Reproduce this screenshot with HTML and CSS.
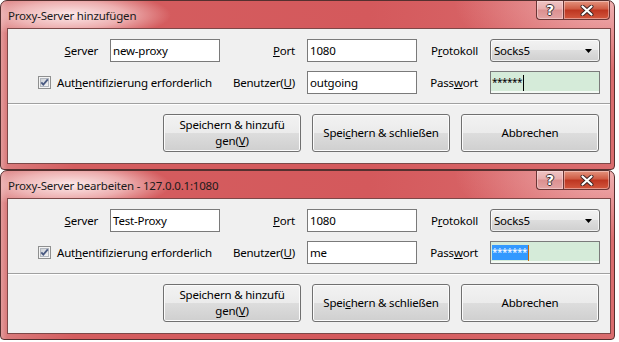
FILE: index.html
```html
<!DOCTYPE html>
<html lang="de">
<head>
<meta charset="utf-8">
<title>Proxy-Server</title>
<link rel="stylesheet" href="styles.css">
</head>
<body>
<div class="screen">
  <div class="window">
    <div class="titlebar">
      <span class="title">Proxy-Server hinzufügen</span>
      <div class="caption">
        <div class="cb help"><span class="q">?</span></div>
        <div class="cb close">
          <svg width="14" height="11" viewBox="0 0 14 11"><path d="M2.5 1.5L11.5 9.5M11.5 1.5L2.5 9.5" stroke="#3a2222" stroke-width="4" stroke-linecap="round"/><path d="M2.5 1.5L11.5 9.5M11.5 1.5L2.5 9.5" stroke="#fff" stroke-width="2.2" stroke-linecap="round"/></svg>
        </div>
      </div>
    </div>
    <div class="client">
      <div class="form">
        <label class="lbl"><u>S</u>erver</label>
        <div class="field">new-proxy</div>
        <label class="lbl"><u>P</u>ort</label>
        <div class="field">1080</div>
        <label class="lbl">P<u>r</u>otokoll</label>
        <div class="combo"><span>Socks5</span><svg width="7" height="4" viewBox="0 0 7 4"><path d="M0 0h7L3.5 4z" fill="#000"/></svg></div>

        <div class="check">
          <svg class="box" width="13" height="13" viewBox="0 0 13 13"><defs><linearGradient id="cg1" x1="0" y1="0" x2="1" y2="1"><stop offset="0" stop-color="#cbcfd5"/><stop offset="1" stop-color="#f6f6f6"/></linearGradient></defs><rect x="0.5" y="0.5" width="12" height="12" fill="#f4f4f4" stroke="#8e8f8f"/><rect x="2.5" y="2.5" width="8" height="8" fill="url(#cg1)" stroke="#b2b7bf"/><path d="M3.3 6.3L5.3 8.6L9.8 3.3" fill="none" stroke="#4a5a82" stroke-width="1.8"/></svg>
          <span>Aut<u>h</u>entifizierung erforderlich</span>
        </div>
        <label class="lbl">Benutzer(<u>U</u>)</label>
        <div class="field">outgoing</div>
        <label class="lbl">Pass<u>w</u>ort</label>
        <div class="field pw"><span class="stars">******</span><span class="caret"></span></div>
      </div>
      <div class="sep"></div>
      <div class="buttons">
        <button class="btn">Speichern &amp; hinzufü<br>gen(<u>V</u>)</button>
        <button class="btn">Spei<u>c</u>hern &amp; schließen</button>
        <button class="btn">Abbrechen</button>
      </div>
    </div>
  </div>

  <div class="window">
    <div class="titlebar">
      <span class="title">Proxy-Server bearbeiten - 127.0.0.1:1080</span>
      <div class="caption">
        <div class="cb help"><span class="q">?</span></div>
        <div class="cb close">
          <svg width="14" height="11" viewBox="0 0 14 11"><path d="M2.5 1.5L11.5 9.5M11.5 1.5L2.5 9.5" stroke="#3a2222" stroke-width="4" stroke-linecap="round"/><path d="M2.5 1.5L11.5 9.5M11.5 1.5L2.5 9.5" stroke="#fff" stroke-width="2.2" stroke-linecap="round"/></svg>
        </div>
      </div>
    </div>
    <div class="client">
      <div class="form">
        <label class="lbl"><u>S</u>erver</label>
        <div class="field">Test-Proxy</div>
        <label class="lbl"><u>P</u>ort</label>
        <div class="field">1080</div>
        <label class="lbl">P<u>r</u>otokoll</label>
        <div class="combo"><span>Socks5</span><svg width="7" height="4" viewBox="0 0 7 4"><path d="M0 0h7L3.5 4z" fill="#000"/></svg></div>

        <div class="check">
          <svg class="box" width="13" height="13" viewBox="0 0 13 13"><defs><linearGradient id="cg2" x1="0" y1="0" x2="1" y2="1"><stop offset="0" stop-color="#cbcfd5"/><stop offset="1" stop-color="#f6f6f6"/></linearGradient></defs><rect x="0.5" y="0.5" width="12" height="12" fill="#f4f4f4" stroke="#8e8f8f"/><rect x="2.5" y="2.5" width="8" height="8" fill="url(#cg2)" stroke="#b2b7bf"/><path d="M3.3 6.3L5.3 8.6L9.8 3.3" fill="none" stroke="#4a5a82" stroke-width="1.8"/></svg>
          <span>Aut<u>h</u>entifizierung erforderlich</span>
        </div>
        <label class="lbl">Benutzer(<u>U</u>)</label>
        <div class="field">me</div>
        <label class="lbl">Pass<u>w</u>ort</label>
        <div class="field pw"><span class="stars sel">*******</span><span class="caret orange"></span></div>
      </div>
      <div class="sep"></div>
      <div class="buttons">
        <button class="btn">Speichern &amp; hinzufü<br>gen(<u>V</u>)</button>
        <button class="btn">Spei<u>c</u>hern &amp; schließen</button>
        <button class="btn">Abbrechen</button>
      </div>
    </div>
  </div>
</div>
</body>
</html>
```

FILE: styles.css
```css
* { box-sizing: border-box; }

body {
  margin: 0;
  background: #ffffff;
  font-family: "Noto Sans", "Segoe UI", sans-serif;
  font-size: 11.5px;
  letter-spacing: -0.2px;
  color: #000;
}

.screen {
  display: flex;
  flex-direction: column;
  width: 619px;
}

.window {
  width: 615px;
  height: 170px;
  border: 1px solid #55302f;
  border-radius: 7px 7px 4px 4px;
  display: flex;
  flex-direction: column;
  background:
    radial-gradient(ellipse 100px 24px at 70px 14px, rgba(255, 242, 242, 0.95), rgba(248, 210, 210, 0.7) 55%, rgba(245, 200, 200, 0) 100%),
    radial-gradient(ellipse 160px 70px at 100% 0, rgba(250, 205, 205, 0.7), rgba(250, 205, 205, 0)),
    linear-gradient(90deg, #e39b9b 0, #d97a7b 6px, #d45d5f 12%, #d4595c 60%, #da6d6f 100%);
}

.titlebar {
  height: 27px;
  flex: none;
  display: flex;
  align-items: flex-start;
  padding-left: 7px;
}

.title {
  line-height: 27px;
  font-size: 11.5px;
  color: #1a1a1a;
  padding-top: 1px;
  white-space: nowrap;
}

.caption {
  margin-left: auto;
  margin-right: 4px;
  display: flex;
}

.cb {
  height: 19px;
  border: 1px solid #6a3535;
  border-top: none;
  display: flex;
  align-items: center;
  justify-content: center;
  box-shadow: inset 0 0 0 1px rgba(255, 230, 230, 0.45);
}

.help {
  width: 27px;
  border-right: none;
  border-radius: 0 0 0 4px;
  background: linear-gradient(#efc4c4 0%, #e9adad 45%, #dc9090 50%, #e3a3a3 100%);
}

.close {
  width: 47px;
  border-radius: 0 0 4px 0;
  background: linear-gradient(#e4947f 0%, #cf5a42 45%, #bd3520 50%, #d3573e 100%);
}

.q {
  font-family: "DejaVu Sans", sans-serif;
  font-weight: bold;
  font-size: 14px;
  letter-spacing: 0;
  line-height: 1;
  color: #fff;
  text-shadow: 1px 0 0 #403030, -1px 0 0 #403030, 0 1px 0 #403030, 0 -1px 0 #403030;
}

.client {
  flex: 1;
  margin: 0 3px 5px 6px;
  border: 1px solid #7d4848;
  background: #f0f0f0;
  display: flex;
  flex-direction: column;
}

.form {
  display: grid;
  grid-template-columns: 102px 110px 87px 110px 73px 110px;
  grid-template-rows: 23px 23px;
  row-gap: 9px;
  padding-top: 10px;
}

.lbl {
  display: flex;
  align-items: center;
  justify-content: flex-end;
  padding-right: 12px;
  white-space: nowrap;
}

.field {
  border: 1px solid #7a7a7a;
  background: #fff;
  display: flex;
  align-items: center;
  padding-left: 2px;
}

.combo {
  border: 1px solid #707070;
  border-radius: 3px;
  background: linear-gradient(#f2f2f2 0%, #ebebeb 50%, #dddddd 50%, #cfcfcf 100%);
  box-shadow: inset 0 0 0 1px rgba(255, 255, 255, 0.7);
  display: flex;
  align-items: center;
  justify-content: space-between;
  padding: 0 7px 0 3px;
}

.check {
  grid-column: 1 / span 2;
  display: flex;
  align-items: center;
  gap: 6px;
  padding-left: 30px;
  white-space: nowrap;
}

.check .box { flex: none; }

.pw {
  background: #d5ebd9;
  box-shadow: inset 0 -2px 0 #f4faf5;
  padding-left: 1px;
}

.stars {
  font-size: 10px;
  line-height: 14px;
  height: 15px;
  display: flex;
  align-items: flex-start;
  letter-spacing: -0.5px;
  padding-right: 1px;
}

.stars.sel {
  background: #3399ff;
  color: #fff;
}

.caret {
  width: 1px;
  height: 16px;
  background: #000;
}

.caret.orange { background: #c86a10; }

.sep {
  margin-top: 9px;
  height: 2px;
  border-top: 1px solid #a0a0a0;
  border-bottom: 1px solid #ffffff;
}

.buttons {
  margin-top: 9px;
  display: flex;
  justify-content: flex-end;
  gap: 11px;
  padding-right: 11px;
}

.btn {
  width: 138px;
  height: 38px;
  margin: 0;
  padding: 0;
  border: 1px solid #707070;
  border-radius: 3px;
  background: linear-gradient(#f2f2f2 0%, #ebebeb 50%, #dddddd 50%, #cfcfcf 100%);
  box-shadow: inset 0 0 0 1px #fbfbfb;
  font-family: inherit;
  font-size: 11.5px;
  letter-spacing: -0.2px;
  line-height: 16px;
  color: #000;
  text-align: center;
}
```
